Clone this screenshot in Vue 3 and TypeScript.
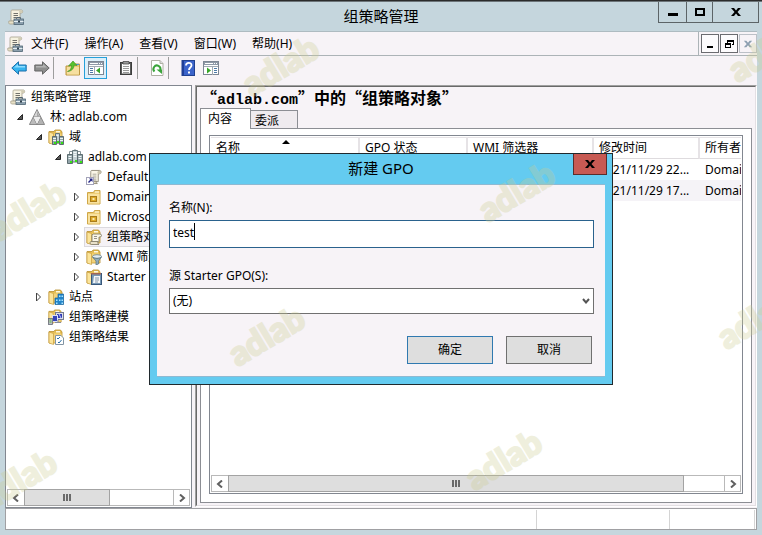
<script setup lang="ts">
import { ref } from 'vue'

interface TreeNode {
  label: string
  icon: string
  level: number
  state?: 'open' | 'closed'
  selected?: boolean
}

interface GpoRow {
  modified: string
  owner: string
}

const menus = ['文件(F)', '操作(A)', '查看(V)', '窗口(W)', '帮助(H)']

const tree: TreeNode[] = [
  { label: '组策略管理', icon: 'console', level: 0 },
  { label: '林: adlab.com', icon: 'forest', level: 1, state: 'open' },
  { label: '域', icon: 'domains', level: 2, state: 'open' },
  { label: 'adlab.com', icon: 'domain', level: 3, state: 'open' },
  { label: 'Default Domain', icon: 'link', level: 4 },
  { label: 'Domain Con', icon: 'ou', level: 4, state: 'closed' },
  { label: 'Microsoft', icon: 'ou', level: 4, state: 'closed' },
  { label: '组策略对象', icon: 'objects', level: 4, state: 'closed', selected: true },
  { label: 'WMI 筛选器', icon: 'filter', level: 4, state: 'closed' },
  { label: 'Starter GPO', icon: 'starter', level: 4, state: 'closed' },
  { label: '站点', icon: 'sites', level: 2, state: 'closed' },
  { label: '组策略建模', icon: 'modeling', level: 2 },
  { label: '组策略结果', icon: 'results', level: 2 },
]

const rows: GpoRow[] = [
  { modified: '2021/11/29 22...', owner: 'Domain Admins' },
  { modified: '2021/11/29 17...', owner: 'Domain Admins' },
]

const treeThumb = 58
const listThumb = 92

const gpoName = ref('test')
const starter = ref('none')
</script>

<template>
  <svg class="defs" aria-hidden="true">
    <symbol id="i-folder" viewBox="0 0 16 16">
      <path d="M1 2.500h5l1-1.500h5.500l1.500 2V14H1z" fill="#e6bf55" stroke="#b98f2e" stroke-width=".8" />
      <path d="M8 2h4v1.500H8z" fill="#fff8df" />
      <path d="M5.500 4.500h8v9h-8z" fill="#f2d27a" />
      <path d="M1 3l4.500 1.500V15.500L1 14z" fill="#fbe49a" stroke="#c89f3e" stroke-width=".7" />
    </symbol>
    <symbol id="i-console" viewBox="0 0 16 16">
      <path d="M4 1h9.500c1.500 0 1.500 3 0 3H12v8H3V3.500C3 2 3 1 4 1z" fill="#f6f2e0" stroke="#a49f8b" stroke-width=".8" />
      <path d="M12 1.500c-1.500.5-1 2.500 0 2.500h1.500c1.300 0 1.300-2.500 0-2.500z" fill="#d2ccb4" />
      <path d="M5.500 4.500h4.500M5.500 6.500h4.500M5.500 8.500h3" stroke="#71716b" />
      <path d="M1 12h7v3H1.800C.5 15 .5 12 1 12z" fill="#e8e1c7" stroke="#a49f8b" stroke-width=".8" />
      <path d="M8.500 9.800V8.500h4v1.300" fill="none" stroke="#526472" />
      <rect x="6" y="10" width="9.500" height="5.500" fill="#8ca0ae" stroke="#4e6473" stroke-width=".8" />
      <path d="M6 12.500h9.500" stroke="#e4edf1" />
      <path d="M10 11.500h2v2h-2z" fill="#31424e" />
    </symbol>
    <symbol id="i-forest" viewBox="0 0 16 16">
      <path d="M8 .5L11.800 8H4.200z" fill="#d5d5d5" stroke="#777" stroke-width=".8" />
      <path d="M4.200 8L8 15.500H.4z" fill="#bbb" stroke="#777" stroke-width=".8" />
      <path d="M11.800 8l3.800 7.500H8z" fill="#b3b3b3" stroke="#777" stroke-width=".8" />
      <path d="M4.500 8h7L8 15z" fill="#eee" />
      <path d="M8 2v6h2.500z" fill="#a9a9a9" />
    </symbol>
    <symbol id="i-domain" viewBox="0 0 16 16">
      <path d="M2.500 5V2.500h11V5M8 0v3" fill="none" stroke="#829194" />
      <path d="M5.500 1.500h5V13h-5z" fill="#c3d0d3" stroke="#66777b" />
      <path d="M.5 5.500h5v9h-5zM10.500 5.500h5v9h-5z" fill="#93a5aa" stroke="#5d6d71" />
      <path d="M1.500 7.500h3M1.500 9.500h3M6.500 3.500h3M6.500 5.500h3M11.500 7.500h3M11.500 9.500h3M6.500 7.500h3" stroke="#f2f8f8" />
      <path d="M3 12h2v2H3zM8 11h2v2H8zM13 12h2v2h-2z" fill="#35e412" />
    </symbol>
    <symbol id="i-domains" viewBox="0 0 16 16">
      <use href="#i-folder" />
      <path d="M7.500 4.500h4V14h-4z" fill="#c3d0d3" stroke="#66777b" />
      <path d="M4.500 7.500h4v8h-4zM11.500 7.500h4v8h-4z" fill="#93a5aa" stroke="#5d6d71" />
      <path d="M5 9.500h3M8.500 6.500h2M12 9.500h3M5 11.500h3M12 11.500h3" stroke="#edf6f5" />
      <path d="M6 13h2v2H6zM13 13h2v2h-2zM9 12h2v2H9z" fill="#35e412" />
    </symbol>
    <symbol id="i-scroll" viewBox="0 0 16 16">
      <path d="M5 1h8.500c2 0 2 3.500 0 3.500H12V13H4V3C4 2 4 1 5 1z" fill="#faf6e7" stroke="#857f6c" stroke-width=".9" />
      <path d="M12 1.500c-1.300.5-1.300 3 0 3h1.500c1.500 0 1.500-3 0-3z" fill="#cdc6ad" />
      <path d="M6 5h4M6 7h4M6 9h4M6 11h4" stroke="#96938a" stroke-width=".8" />
      <path d="M2 12.500h8c-.8 1 .3 2.500 1 2.500H2.500C.5 15 .5 12.500 2 12.500z" fill="#e9e1c8" stroke="#857f6c" stroke-width=".9" />
    </symbol>
    <symbol id="i-link" viewBox="0 0 16 16">
      <use href="#i-scroll" x="1" width="15" height="16" />
      <rect x=".5" y="8.500" width="7" height="7" fill="#fff" stroke="#a3a3b9" />
      <path d="M3 9.500h3.500V13L5.200 11.700 3 14 2 13l2.200-2.300z" fill="#232486" />
    </symbol>
    <symbol id="i-ou" viewBox="0 0 16 16">
      <path d="M1.500 3.500h6l1-2H14v13.500H1.500z" fill="#efcf78" stroke="#cfa748" />
      <path d="M9 3h4" stroke="#fffbe0" />
      <path d="M2 5h11.500v9.500H2z" fill="#f8e2a0" />
      <rect x="4.500" y="7.500" width="6" height="5" fill="#dda927" stroke="#a97c1a" />
      <path d="M6.500 9h2v2h-2z" fill="#fae9b2" />
    </symbol>
    <symbol id="i-objects" viewBox="0 0 16 16">
      <use href="#i-folder" />
      <path d="M7 5h7c2 0 2 3 0 3h-1v5H6V6z" fill="#faf6e7" stroke="#857f6c" stroke-width=".9" />
      <path d="M8 7.500h3M8 9.500h3" stroke="#96938a" />
      <path d="M5 12.500h7c-.6 1 .3 3 1 3H5.500c-1.800 0-1.800-3-.5-3z" fill="#e9e1c8" stroke="#857f6c" stroke-width=".9" />
    </symbol>
    <symbol id="i-filter" viewBox="0 0 16 16">
      <use href="#i-folder" />
      <ellipse cx="11" cy="7.500" rx="4.500" ry="1.800" fill="#e4edf2" stroke="#69808d" stroke-width=".8" />
      <path d="M6.500 8c2 2 7 2 9 0L12.500 12v3l-2.500 1v-4z" fill="#91adbc" stroke="#577282" stroke-width=".7" />
    </symbol>
    <symbol id="i-starter" viewBox="0 0 16 16">
      <use href="#i-folder" />
      <rect x="5.500" y="4.500" width="10" height="11" fill="#7698b5" stroke="#38577a" />
      <path d="M5 4h10v1.500H5z" fill="#a26655" />
      <path d="M8 7h6v7H7z" fill="#f4f7f9" />
      <path d="M9 9h4M9 11h4M9 13h3" stroke="#6b8299" stroke-width=".8" />
    </symbol>
    <symbol id="i-sites" viewBox="0 0 16 16">
      <use href="#i-folder" />
      <path d="M10 5h5.500v10.500H7V9h3z" fill="#2385c9" stroke="#17639b" stroke-width=".7" />
      <path d="M11 6.500h1.500V8H11zM13.500 6.500H15V8h-1.500zM8 10.500h1.500V12H8zM11 10.500h1.500V12H11zM13.500 10.500H15V12h-1.500zM8 13.500h1.500V15H8zM13.500 13.500H15V15h-1.500z" fill="#a9e4ff" />
    </symbol>
    <symbol id="i-modeling" viewBox="0 0 16 16">
      <use href="#i-folder" width="15" height="15" />
      <rect x="7.500" y="3.500" width="8" height="7" fill="#dadde6" stroke="#73798e" />
      <path d="M9 5h5v4H9z" fill="#303ab7" />
      <path d="M11 5l2 4" stroke="#c1c8ff" />
      <rect x="4.500" y="6.500" width="5" height="6" fill="#3642b8" stroke="#dce0f5" />
      <rect x=".5" y="9.500" width="4" height="6" fill="#b9bdc6" stroke="#686b77" stroke-width=".8" />
      <path d="M1.500 11h2M1.500 13h2" stroke="#5dba3a" />
      <path d="M7 13.500h6M10 11v3" stroke="#858a99" />
    </symbol>
    <symbol id="i-results" viewBox="0 0 16 16">
      <use href="#i-folder" />
      <path d="M7.500 6.500H13L15.500 9v6.500h-8z" fill="#fff" stroke="#8295a4" />
      <path d="M9 9l1 1 2-2M10 13l1 1 2.500-3" fill="none" stroke="#2870a8" />
    </symbol>
    <symbol id="i-back" viewBox="0 0 16 16">
      <path d="M.8 8L7.500 1.800V5h7.700v6H7.500v3.200z" fill="#36b4ef" stroke="#1a6faa" />
      <path d="M3 7.500l4-3.500v2h7v1.500z" fill="#8edcff" />
    </symbol>
    <symbol id="i-forward" viewBox="0 0 16 16">
      <path d="M15.200 8L8.500 1.800V5H.8v6h7.700v3.200z" fill="#8e8e8e" stroke="#656565" />
      <path d="M13 7.500L9 4v2H2v1.500z" fill="#b3b3b3" />
    </symbol>
    <symbol id="i-up" viewBox="0 0 16 16">
      <path d="M1 6h4l1-2h8.500v11H1z" fill="#eacb78" stroke="#bd9742" />
      <path d="M2 7h12v7.500H2z" fill="#f6dfa0" />
      <path d="M11 4.500h3" stroke="#4b99d0" />
      <path d="M2.500 11.500C5.500 10.500 6.500 8 6.500 5.500L3.500 6l4.500-5 4 4.500-3-.3c0 3.500-2.500 6-6.500 6.300z" fill="#58c42e" stroke="#37891c" stroke-width=".6" />
    </symbol>
    <symbol id="i-treepane" viewBox="0 0 16 16">
      <rect x=".5" y="1.500" width="15" height="13" fill="#fff" stroke="#7e8794" />
      <path d="M1 2h14v3H1z" fill="#8f99a7" />
      <path d="M2 3.500h8M11 3.500h1M13 3.500h1" stroke="#fff" />
      <path d="M1 6.500h14M6.500 6.500V15" stroke="#a1a9b3" />
      <path d="M2 8.500h3M2 10.500h3M2 12.500h3" stroke="#4d79a7" />
      <path d="M12 7.500v6l-4-3z" fill="#37a629" />
    </symbol>
    <symbol id="i-actionpane" viewBox="0 0 16 16">
      <rect x=".5" y="1.500" width="15" height="13" fill="#fff" stroke="#7e8794" />
      <path d="M1 2h14v3H1z" fill="#8f99a7" />
      <path d="M2 3.500h8M11 3.500h1M13 3.500h1" stroke="#fff" />
      <path d="M1 6.500h14M9.500 6.500V15" stroke="#a1a9b3" />
      <path d="M11 8.500h3M11 10.500h3M11 12.500h3" stroke="#4d79a7" />
      <path d="M4 7.500v6l4-3z" fill="#37a629" />
    </symbol>
    <symbol id="i-clipboard" viewBox="0 0 16 16">
      <rect x="2.500" y="2.500" width="11" height="12" fill="#5a5a5a" stroke="#3d3d3d" />
      <path d="M4 4h8v9.500H4z" fill="#fafafa" />
      <path d="M5 1.500h6V4H5z" fill="#999" stroke="#4b4b4b" stroke-width=".8" />
      <path d="M5 6.500h6M5 8.500h6M5 10.500h6M5 12.500h6" stroke="#999" />
    </symbol>
    <symbol id="i-refresh" viewBox="0 0 16 16">
      <path d="M2.500.5H11L14 3.500v12H2.500z" fill="#fff" stroke="#b0b0a5" />
      <path d="M11 .5v3h3" fill="#ddd" stroke="#b0b0a5" />
      <path d="M5.500 11.500A3.500 3.500 0 1 1 11.300 10" fill="none" stroke="#3aa43a" stroke-width="2" />
      <path d="M7.500 9.500h5.500V14z" fill="#3aa43a" />
    </symbol>
    <symbol id="i-help" viewBox="0 0 16 16">
      <rect x="2" y=".5" width="12.500" height="15" fill="#3b63ca" stroke="#20408f" />
      <path d="M2 1h2v14H2z" fill="#203f97" />
      <path d="M6 5.500C6 2 11.500 2 11.500 5.200 11.500 7.500 9 7.500 9 10" fill="none" stroke="#fff" stroke-width="1.800" />
      <path d="M8 11.500h2v2H8z" fill="#fff" />
    </symbol>
  </svg>

  <main class="window">
    <div class="backdrop-edge"></div>
    <header class="titlebar">
      <svg class="icon title-icon"><use href="#i-console" /></svg>
      <h1 class="window-title">组策略管理</h1>
      <div class="window-buttons">
        <button class="win-btn minimize" aria-label="最小化">
          <svg width="12" height="12" viewBox="0 0 12 12"><path d="M1 7h10v3H1z" /></svg>
        </button>
        <button class="win-btn maximize" aria-label="最大化">
          <svg width="12" height="12" viewBox="0 0 12 12"><path d="M1 2h10v8H1zM3 4v4h6V4z" fill-rule="evenodd" /></svg>
        </button>
        <button class="win-btn close" aria-label="关闭">
          <svg width="12" height="12" viewBox="0 0 12 12"><path d="M1 2h3l2 2.500L8 2h3L7.500 6 11 10H8L6 7.500 4 10H1l3.500-4z" /></svg>
        </button>
      </div>
    </header>

    <div class="menubar">
      <nav class="menus">
        <svg class="icon"><use href="#i-console" /></svg>
        <button v-for="menu in menus" :key="menu" class="menu">{{ menu }}</button>
      </nav>
      <div class="child-buttons">
        <button class="child-btn" aria-label="最小化子窗口">
          <svg width="10" height="10" viewBox="0 0 10 10"><path d="M2 7h6v2H2z" /></svg>
        </button>
        <button class="child-btn" aria-label="还原子窗口">
          <svg width="10" height="10" viewBox="0 0 10 10"><path d="M3 1h7v5H8V5h1V3H4v1H3zM1 4h6v5H1zM2 6v2h4V6z" fill-rule="evenodd" /></svg>
        </button>
        <button class="child-btn inactive" aria-label="关闭子窗口">
          <svg width="10" height="10" viewBox="0 0 12 12"><path d="M1 2h3l2 2.500L8 2h3L7.500 6 11 10H8L6 7.500 4 10H1l3.500-4z" fill="#8d9fb1" /></svg>
        </button>
      </div>
    </div>

    <div class="toolbar">
      <button class="tool" aria-label="后退"><svg class="icon"><use href="#i-back" /></svg></button>
      <button class="tool" aria-label="前进"><svg class="icon"><use href="#i-forward" /></svg></button>
      <span class="separator"></span>
      <button class="tool" aria-label="上一级"><svg class="icon"><use href="#i-up" /></svg></button>
      <button class="tool pressed" aria-label="显示控制台树"><svg class="icon"><use href="#i-treepane" /></svg></button>
      <span class="space"></span>
      <button class="tool" aria-label="属性"><svg class="icon"><use href="#i-clipboard" /></svg></button>
      <span class="separator"></span>
      <button class="tool" aria-label="刷新"><svg class="icon"><use href="#i-refresh" /></svg></button>
      <span class="separator"></span>
      <button class="tool" aria-label="帮助"><svg class="icon"><use href="#i-help" /></svg></button>
      <button class="tool" aria-label="显示操作窗格"><svg class="icon"><use href="#i-actionpane" /></svg></button>
    </div>

    <div class="panes">
      <aside class="tree-pane">
        <ul class="tree">
          <li v-for="node in tree" :key="node.label" class="node" :class="`level-${node.level}`">
            <span v-if="node.level" class="twisty">
              <svg v-if="node.state === 'open'" width="8" height="8" viewBox="0 0 8 8">
                <path d="M6.500 1.500v5h-5z" fill="#595959" stroke="#262626" />
              </svg>
              <svg v-else-if="node.state === 'closed'" width="8" height="10" viewBox="0 0 8 10">
                <path d="M1.500 1v8L5.500 5z" fill="#fff" stroke="#444" />
              </svg>
            </span>
            <span class="node-body" :class="{ selected: node.selected }">
              <svg class="icon"><use :href="`#i-${node.icon}`" /></svg>
              <span>{{ node.label }}</span>
            </span>
          </li>
        </ul>
        <div class="scrollbar">
          <button class="scroll-btn" aria-label="向左滚动">
            <svg width="8" height="8" viewBox="0 0 8 8"><path d="M6 .5L2 4l4 3.500" /></svg>
          </button>
          <div class="track"><div class="thumb" :style="{ width: treeThumb + '%' }"><i></i><i></i><i></i></div></div>
          <button class="scroll-btn" aria-label="向右滚动">
            <svg width="8" height="8" viewBox="0 0 8 8"><path d="M2 .5L6 4 2 7.500" /></svg>
          </button>
        </div>
      </aside>

      <section class="detail-pane">
        <div class="detail">
          <h2 class="heading">“<span class="mono">adlab.com</span>”中的“组策略对象”</h2>
          <div class="tabs">
            <button class="tab active">内容</button>
            <button class="tab">委派</button>
          </div>
          <div class="tab-page">
            <div class="list">
              <table class="grid">
                <thead>
                  <tr>
                    <th class="col-name">
                      名称
                      <svg class="sort" width="8" height="4" viewBox="0 0 8 4"><path d="M4 0l4 4H0z" /></svg>
                    </th>
                    <th class="col-state">GPO 状态</th>
                    <th class="col-wmi">WMI 筛选器</th>
                    <th class="col-date">修改时间</th>
                    <th>所有者</th>
                  </tr>
                </thead>
                <tbody>
                  <tr v-for="row in rows" :key="row.modified">
                    <td></td>
                    <td></td>
                    <td></td>
                    <td>{{ row.modified }}</td>
                    <td>{{ row.owner }}</td>
                  </tr>
                </tbody>
              </table>
              <div class="scrollbar">
                <button class="scroll-btn" aria-label="向左滚动">
                  <svg width="8" height="8" viewBox="0 0 8 8"><path d="M6 .5L2 4l4 3.500" /></svg>
                </button>
                <div class="track"><div class="thumb" :style="{ width: listThumb + '%' }"><i></i><i></i><i></i></div></div>
                <button class="scroll-btn" aria-label="向右滚动">
                  <svg width="8" height="8" viewBox="0 0 8 8"><path d="M2 .5L6 4 2 7.500" /></svg>
                </button>
              </div>
            </div>
          </div>
        </div>
      </section>
    </div>

    <footer class="statusbar">
      <span class="status-main"></span>
      <span class="status-mid"></span>
      <span class="status-end"></span>
    </footer>

    <form class="dialog" role="dialog" aria-labelledby="dialog-title" @submit.prevent>
      <div class="dialog-title">
        <h2 id="dialog-title">新建 GPO</h2>
        <button type="button" class="dialog-close" aria-label="关闭对话框">
          <svg width="12" height="12" viewBox="0 0 12 12"><path d="M1 2h3l2 2.500L8 2h3L7.500 6 11 10H8L6 7.500 4 10H1l3.500-4z" /></svg>
        </button>
      </div>
      <div class="dialog-body">
        <label for="gpo-name">名称(N):</label>
        <div class="field name-field">
          <input id="gpo-name" v-model="gpoName" type="text" autocomplete="off" spellcheck="false" />
          <span class="caret"></span>
        </div>
        <label for="gpo-source">源 Starter GPO(S):</label>
        <div class="field">
          <select id="gpo-source" v-model="starter">
            <option value="none">(无)</option>
          </select>
          <svg class="chevron" width="8" height="6" viewBox="0 0 8 6"><path d="M1 1l3 3.500L7 1" /></svg>
        </div>
        <div class="actions">
          <button type="submit" class="action primary">确定</button>
          <button type="button" class="action">取消</button>
        </div>
      </div>
    </form>

    <div class="marks" aria-hidden="true">
      <span v-for="n in 8" :key="n" class="mark" :class="`mark-${n}`">adlab</span>
    </div>
  </main>
</template>

<style>
body {
  margin: 0;
  background: #c5d6dd;
}
</style>

<style scoped>
* {
  box-sizing: border-box;
}

.defs {
  position: absolute;
  width: 0;
  height: 0;
}

.window {
  position: relative;
  display: flex;
  flex-direction: column;
  height: 100vh;
  padding: 0 5px 5px;
  overflow: hidden;
  background: #c5d6dd;
  color: #000;
  font: 12px/20px "Noto Sans", "Noto Sans CJK SC", sans-serif;
}

button,
input,
select {
  margin: 0;
  padding: 0;
  border: 0;
  border-radius: 0;
  background: none;
  color: inherit;
  font: inherit;
}

svg {
  display: block;
  flex: none;
}

.icon {
  width: 16px;
  height: 16px;
}

.backdrop-edge {
  flex: none;
  height: 2px;
  margin: 0 -5px;
  background: linear-gradient(#2b2b2b 50%, #6c7478 50%);
}

.titlebar {
  display: grid;
  grid-template-columns: 1fr auto 1fr;
  flex: none;
  height: 29px;
}

.title-icon {
  margin: 7px 0 0 3px;
}

.window-title {
  margin: 0;
  font-size: 15px;
  font-weight: 400;
  line-height: 28px;
}

.window-buttons {
  display: flex;
  justify-self: end;
  height: 21px;
  margin-right: -2px;
  border: 1px solid #5c6467;
  border-top: 0;
}

.win-btn {
  display: grid;
  place-items: center;
  width: 27px;
}

.win-btn + .win-btn {
  border-left: 1px solid #5c6467;
}

.win-btn.maximize {
  width: 26px;
}

.win-btn.close {
  width: 46px;
}

.menubar {
  display: flex;
  flex: none;
  height: 25px;
  border-top: 1px solid #aebbc1;
  border-bottom: 1px solid #acb3b7;
  background: #f7f3f7;
}

.menus {
  display: flex;
  flex: 1;
  align-items: center;
  gap: 16px;
  padding-left: 2px;
  border-right: 1px solid #acb3b7;
}

.menus .icon {
  margin-right: -8px;
}

.menu {
  white-space: nowrap;
}

.child-buttons {
  display: flex;
  gap: 1px;
  padding: 2px 0 2px 2px;
}

.child-btn {
  display: grid;
  place-items: center;
  width: 18px;
  border: 1px solid #6b6b70;
  background: #fdfbfd;
}

.child-btn.inactive {
  border-color: #bcc0c7;
  background: #f7f3f7;
}

.toolbar {
  display: flex;
  flex: none;
  align-items: flex-start;
  height: 29px;
  padding: 1px 2px;
  background: #f7f3f7;
}

.tool {
  display: grid;
  place-items: center;
  width: 23px;
  height: 22px;
}

.tool.pressed {
  border: 1px solid #26a0da;
  background: #dceffa;
}

.separator {
  width: 1px;
  height: 22px;
  margin-right: 7px;
  background: #9d9d9d;
}

.space {
  width: 7px;
}

.panes {
  display: flex;
  flex: 1;
  gap: 3px;
  min-height: 0;
  background: #f7f3f7;
}

.tree-pane {
  display: flex;
  flex: none;
  flex-direction: column;
  width: 187px;
  padding: 1px;
  border: 1px solid #828790;
  background: #fff;
}

.tree {
  flex: 1;
  min-height: 0;
  margin: 0;
  padding: 0;
  overflow: hidden;
  list-style: none;
}

.node {
  display: flex;
  align-items: center;
  height: 20px;
  white-space: nowrap;
}

.level-0 {
  padding-left: 1px;
}

.level-1 {
  padding-left: 6px;
}

.level-2 {
  padding-left: 25px;
}

.level-3 {
  padding-left: 44px;
}

.level-4 {
  padding-left: 63px;
}

.twisty {
  display: grid;
  flex: none;
  place-items: center;
  width: 14px;
}

.node-body {
  display: flex;
  align-items: center;
  gap: 5px;
  height: 20px;
  padding: 0 2px;
}

.node-body.selected {
  background: #f5f2f6;
  box-shadow: inset 0 0 0 1px #dcdade;
}

.scrollbar {
  display: flex;
  flex: none;
  height: 17px;
  border: 1px solid #b9b9b9;
  background: #fff;
}

.scroll-btn {
  display: grid;
  place-items: center;
  width: 16px;
}

.scroll-btn:last-child {
  border-left: 1px solid #b9b9b9;
}

.scroll-btn path {
  fill: none;
  stroke: #606060;
  stroke-width: 2;
}

.track {
  flex: 1;
}

.thumb {
  display: flex;
  align-items: center;
  justify-content: center;
  gap: 1px;
  height: 17px;
  margin-top: -1px;
  border: 1px solid #a3a3a3;
  background: #dedede;
}

.thumb i {
  width: 2px;
  height: 7px;
  background: #6a6a6a;
}

.detail-pane {
  flex: 1;
  min-width: 0;
  margin-bottom: 1px;
  border: 1px solid #fff;
  border-top-color: #a0a0a0;
  border-left-color: #a0a0a0;
}

.detail {
  display: flex;
  flex-direction: column;
  height: 100%;
  padding: 0 3px 2px;
  border: 1px solid #e3dfe3;
  border-top-color: #696969;
  border-left-color: #696969;
}

.heading {
  height: 21px;
  margin: 0 0 0 1px;
  font: 700 16px/21px "Noto Sans CJK SC", sans-serif;
  white-space: nowrap;
}

.mono {
  font: 700 15px/20px "Liberation Mono", monospace;
}

.tabs {
  display: flex;
  align-items: flex-end;
  height: 20px;
}

.tab {
  position: relative;
  height: 18px;
  padding: 0 18px 0 4px;
  border: 1px solid #8c8e94;
  border-bottom: 0;
  border-left: 0;
  background: #efebef;
}

.tab.active {
  z-index: 1;
  height: 21px;
  margin-bottom: -1px;
  padding: 0 18px 0 7px;
  border-left: 1px solid #8c8e94;
  background: #fff;
}

.tab-page {
  display: flex;
  flex: 1;
  min-height: 0;
  padding: 6px 8px 8px;
  border: 1px solid #8c8e94;
  background: #fff;
}

.list {
  display: flex;
  flex: 1;
  flex-direction: column;
  justify-content: space-between;
  min-width: 0;
  padding: 1px;
  border: 1px solid #828790;
}

.grid {
  width: 100%;
  border-spacing: 0;
  table-layout: fixed;
}

.grid th,
.grid td {
  height: 21px;
  padding: 0 0 0 5px;
  overflow: hidden;
  font-weight: 400;
  line-height: 20px;
  text-align: left;
  white-space: nowrap;
}

.grid th {
  position: relative;
  border-top: 1px solid #e6e3e6;
  border-right: 2px solid #e6e3e6;
  border-bottom: 1px solid #dedbde;
}

.grid th:last-child {
  border-right: 0;
}

.grid tbody tr:nth-child(even) {
  background: #f5f3f7;
}

.col-name {
  width: 149px;
}

.col-state {
  width: 108px;
}

.col-wmi {
  width: 126px;
}

.col-date {
  width: 106px;
}

.sort {
  position: absolute;
  top: 2px;
  left: 48%;
}

.statusbar {
  display: flex;
  flex: none;
  height: 22px;
  padding: 1px 1px 0 0;
  border: 1px solid #a0a0a3;
  background: #fff;
}

.statusbar span {
  border-right: 1px solid #d4d4d4;
}

.status-main {
  flex: 1;
}

.status-mid {
  width: 133px;
}

.status-end {
  width: 85px;
}

.dialog {
  position: absolute;
  top: 153px;
  left: 149px;
  width: 464px;
  padding: 0 7px 7px;
  border: 1px solid #20292d;
  background: #64cbf0;
}

.dialog-title {
  display: grid;
  grid-template-columns: 1fr auto 1fr;
  height: 30px;
}

.dialog-title h2 {
  grid-column: 2;
  margin: 0;
  font-size: 15px;
  font-weight: 400;
  line-height: 29px;
}

.dialog-close {
  display: grid;
  place-items: center;
  justify-self: end;
  width: 34px;
  height: 21px;
  margin-right: -2px;
  border: 1px solid #5a2d2b;
  border-top: 0;
  background: #c75a53;
}

.dialog-body {
  display: flex;
  flex-direction: column;
  padding: 13px 11px 12px 12px;
  border: 1px solid #8fb9d2;
  border-right: 0;
  border-left: 0;
  background: #f7f3f7;
}

.field {
  position: relative;
  display: flex;
  margin-bottom: 22px;
}

.name-field {
  margin: 2px 0 18px;
}

.dialog-body label {
  height: 20px;
}

.field input {
  width: 100%;
  height: 28px;
  padding: 0 3px 4px;
  border: 1px solid #2a628d;
  outline: 0;
  background: #fff;
}

.field select {
  width: 100%;
  height: 26px;
  margin-top: 2px;
  padding: 0 3px;
  border: 1px solid #707070;
  appearance: none;
  background: #fff;
}

.caret {
  position: absolute;
  top: 3px;
  left: 25px;
  width: 1px;
  height: 17px;
  background: #000;
}

.chevron {
  position: absolute;
  top: 12px;
  right: 4px;
}

.chevron path {
  fill: none;
  stroke: #555;
  stroke-width: 2;
}

.actions {
  display: flex;
  justify-content: flex-end;
  gap: 13px;
  padding-right: 2px;
}

.action {
  width: 86px;
  height: 28px;
  border: 1px solid #707070;
  background: #dedede;
}

.action.primary {
  border-color: #3079b0;
}

.marks {
  position: absolute;
  inset: 0;
  overflow: hidden;
  pointer-events: none;
}

.mark {
  position: absolute;
  color: #cbcd91;
  font: 900 34px/34px Lato, sans-serif;
  opacity: 0.3;
  -webkit-text-stroke: 2px #cbcd91;
  transform: translate(-50%, -50%) rotate(-31deg);
}

.mark-1 {
  top: 65px;
  left: 280px;
}

.mark-2 {
  top: 51px;
  left: 766px;
}

.mark-3 {
  top: 210px;
  left: 27px;
}

.mark-4 {
  top: 191px;
  left: 516px;
}

.mark-5 {
  top: 335px;
  left: 266px;
}

.mark-6 {
  top: 318px;
  left: 755px;
}

.mark-7 {
  top: 459px;
  left: 503px;
}

.mark-8 {
  top: 479px;
  left: 18px;
}
</style>
